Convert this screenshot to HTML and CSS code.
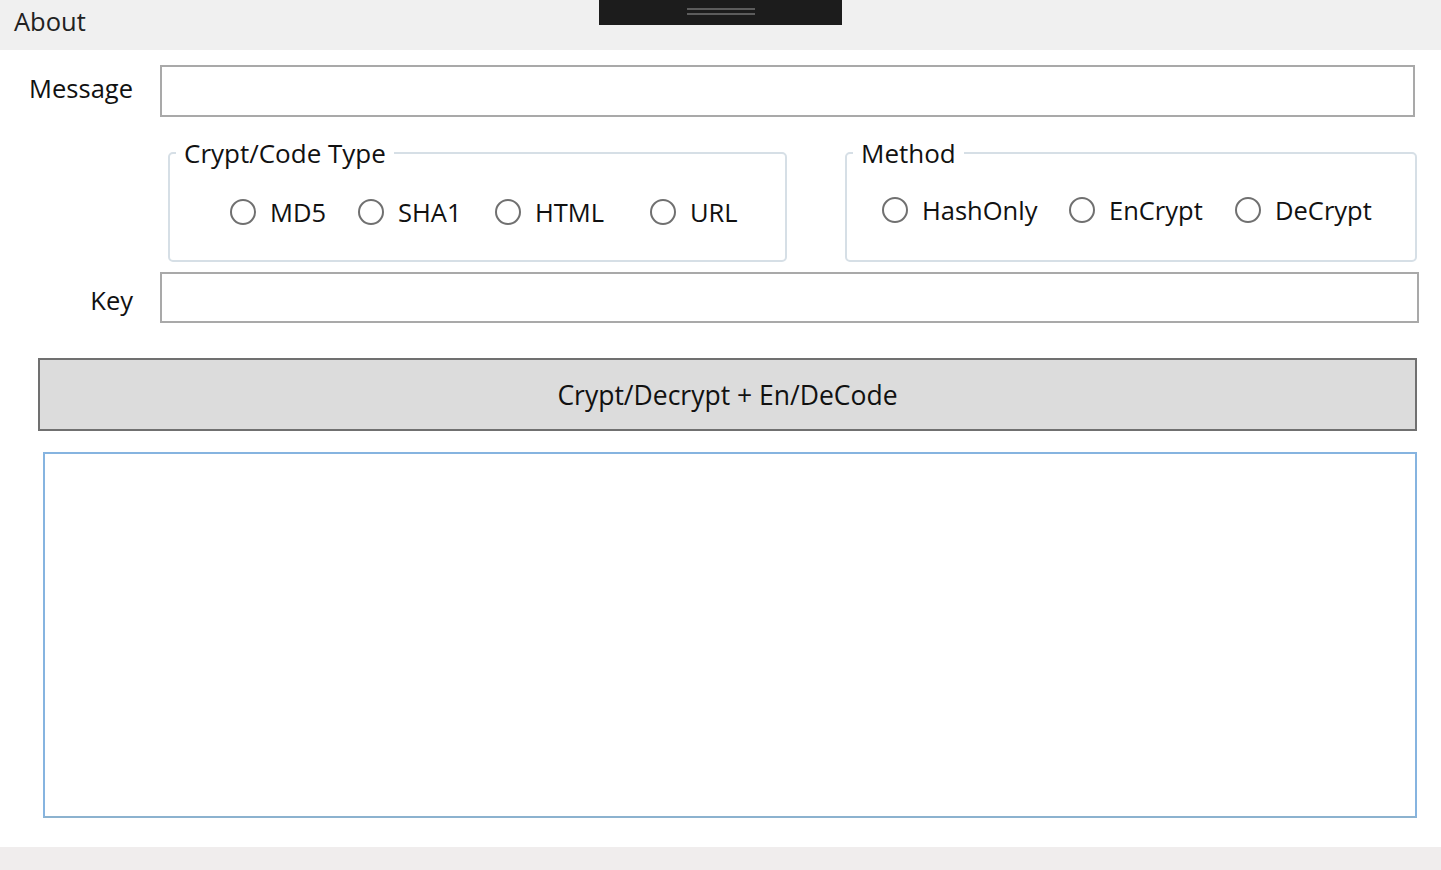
FILE: index.html
```html
<!DOCTYPE html>
<html lang="en">
<head>
    <meta charset="UTF-8">
    <meta name="viewport" content="width=device-width, initial-scale=1.0">
    <title>Crypt / Code</title>
    <link rel="stylesheet" href="styles.css">
</head>
<body>
    <header class="topbar">
        <span class="menu-item">About</span>
        <div class="drag-handle"><span></span><span></span></div>
    </header>

    <main class="form">
        <div class="field-row message-row">
            <label class="field-label" for="message">Message</label>
            <input type="text" id="message" class="text-input message-input">
        </div>

        <div class="groups">
            <fieldset class="group type-group">
                <legend>Crypt/Code Type</legend>
                <div class="options">
                    <label class="option opt-md5"><input type="radio" name="type"><span>MD5</span></label>
                    <label class="option opt-sha1"><input type="radio" name="type"><span>SHA1</span></label>
                    <label class="option opt-html"><input type="radio" name="type"><span>HTML</span></label>
                    <label class="option"><input type="radio" name="type"><span>URL</span></label>
                </div>
            </fieldset>

            <fieldset class="group method-group">
                <legend>Method</legend>
                <div class="options">
                    <label class="option opt-hash"><input type="radio" name="method"><span>HashOnly</span></label>
                    <label class="option opt-enc"><input type="radio" name="method"><span>EnCrypt</span></label>
                    <label class="option"><input type="radio" name="method"><span>DeCrypt</span></label>
                </div>
            </fieldset>
        </div>

        <div class="field-row key-row">
            <label class="field-label" for="key">Key</label>
            <input type="text" id="key" class="text-input key-input">
        </div>

        <button class="run-btn">Crypt/Decrypt + En/DeCode</button>

        <textarea class="output"></textarea>
    </main>

    <footer class="statusbar"></footer>
</body>
</html>
```

FILE: styles.css
```css
* {
    box-sizing: border-box;
}

body {
    font-family: 'Open Sans', 'Noto Sans', sans-serif;
    margin: 0;
    height: 870px;
    display: flex;
    flex-direction: column;
    background: #fff;
    color: #111;
    overflow: hidden;
}

.topbar {
    height: 50px;
    flex: none;
    background: #f0f0f0;
    padding-left: 14px;
    position: relative;
}

.menu-item {
    font-size: 25.5px;
    line-height: 42px;
    color: #222;
}

.drag-handle {
    position: absolute;
    left: 599px;
    top: 0;
    width: 243px;
    height: 25px;
    background: #1c1c1c;
    display: flex;
    flex-direction: column;
    align-items: center;
    padding-top: 8px;
    gap: 3px;
}

.drag-handle span {
    display: block;
    width: 68px;
    height: 2px;
    background: #5c5c5c;
}

.form {
    flex: 1;
    display: flex;
    flex-direction: column;
    align-items: flex-start;
    padding-top: 15px;
}

.field-row {
    display: flex;
    align-items: center;
}

.field-label {
    width: 133px;
    margin-right: 27px;
    text-align: right;
    font-size: 25.5px;
    white-space: nowrap;
}

.message-row .field-label {
    margin-bottom: 6px;
}

.key-row .field-label {
    margin-top: 5px;
}

.text-input {
    border: 2px solid #a9a9a9;
    background: #fff;
    height: 52px;
    font: inherit;
    font-size: 22px;
    padding: 0 10px;
}

.message-input {
    width: 1255px;
}

.groups {
    display: flex;
    gap: 58px;
    margin-top: 20px;
    margin-left: 168px;
}

.group {
    margin: 0;
    border: 2px solid #d6dfe6;
    border-radius: 5px;
    padding: 27px 0 32px;
}

.group legend {
    font-size: 26px;
    line-height: 32px;
    padding: 0 8px;
    margin-left: 6px;
}

.type-group {
    width: 619px;
}

.type-group .options {
    padding-left: 60px;
}

.method-group {
    width: 572px;
}

.method-group .options {
    padding-left: 35px;
}

.options {
    display: flex;
    align-items: center;
    height: 32px;
}

.option {
    display: flex;
    align-items: center;
    gap: 14px;
    font-size: 25.5px;
}

.option input {
    appearance: none;
    margin: 0;
    width: 26px;
    height: 26px;
    border: 2px solid #707070;
    border-radius: 50%;
    background: #fff;
}

.option input:checked {
    background: radial-gradient(circle, #222 0 5px, #fff 6px);
}

.opt-md5 { width: 128px; }
.opt-sha1 { width: 137px; }
.opt-html { width: 155px; }
.opt-hash { width: 187px; }
.opt-enc { width: 166px; }

.method-group .option {
    margin-top: -4px;
}

.key-row {
    margin-top: 10px;
}

.key-input {
    width: 1259px;
    height: 51px;
}

.run-btn {
    margin-top: 35px;
    margin-left: 38px;
    width: 1379px;
    height: 73px;
    background: #dcdcdc;
    border: 2px solid #707070;
    font: inherit;
    font-size: 26.5px;
    color: #111;
    cursor: pointer;
}

.run-btn:hover {
    background: #e5e5e5;
}

.output {
    margin-top: 21px;
    margin-left: 43px;
    width: 1374px;
    height: 366px;
    border: 2px solid #86b4e0;
    border-bottom-color: #8cb2cf;
    resize: none;
    font: inherit;
    font-size: 20px;
}

.statusbar {
    height: 23px;
    flex: none;
    background: #f0eded;
}
```
